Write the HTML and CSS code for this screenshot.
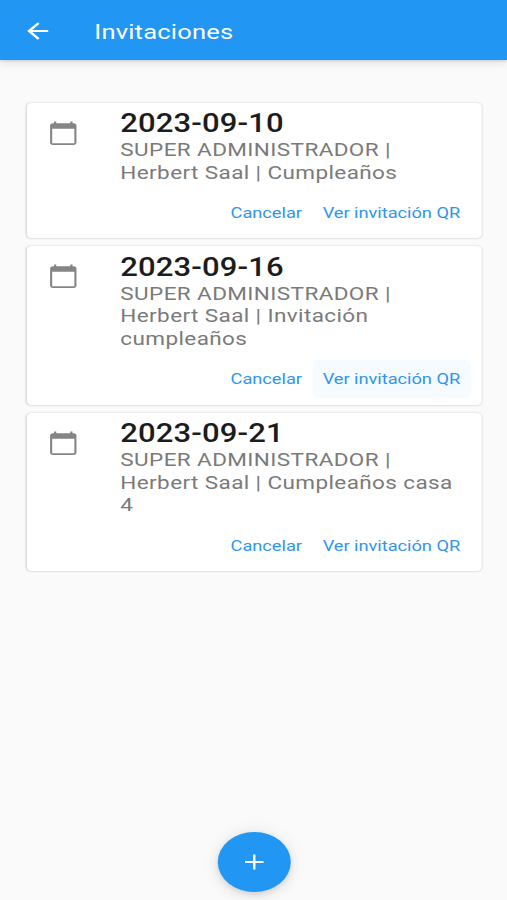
FILE: index.html
```html
<!DOCTYPE html>
<html lang="es">
<head>
<meta charset="utf-8">
<title>Invitaciones</title>
<link rel="stylesheet" href="styles.css">
</head>
<body>
<svg width="0" height="0" class="defs">
  <symbol id="calendar" viewBox="0 0 24 24"><path d="M20 3h-1V1.300h-1.700V3H6.700V1.300H5V3H4c-1.100 0-2 .9-2 2v16c0 1.100.9 2 2 2h16c1.100 0 2-.9 2-2V5c0-1.100-.9-2-2-2zm.4 18.400H3.600V8h16.800v13.400z"/></symbol>
</svg>
<div class="screen">
  <header class="bar">
    <svg class="back" viewBox="0 0 24 24"><path d="M20 11H7.830l5.590-5.590L12 4l-8 8 8 8 1.410-1.410L7.830 13H20v-2z"/></svg>
    <h1 class="title">Invitaciones</h1>
  </header>
  <main class="list">
    <article class="card">
      <div class="tile">
        <svg class="cal"><use href="#calendar"/></svg>
        <div class="text"><h2 class="date">2023-09-10</h2><p class="info">SUPER ADMINISTRADOR |<br>Herbert Saal | Cumpleaños</p></div>
      </div>
      <div class="actions"><button class="btn">Cancelar</button><button class="btn">Ver invitación QR</button></div>
    </article>
    <article class="card">
      <div class="tile">
        <svg class="cal"><use href="#calendar"/></svg>
        <div class="text"><h2 class="date">2023-09-16</h2><p class="info">SUPER ADMINISTRADOR |<br>Herbert Saal | Invitación<br>cumpleaños</p></div>
      </div>
      <div class="actions"><button class="btn">Cancelar</button><button class="btn active">Ver invitación QR</button></div>
    </article>
    <article class="card">
      <div class="tile">
        <svg class="cal"><use href="#calendar"/></svg>
        <div class="text"><h2 class="date">2023-09-21</h2><p class="info">SUPER ADMINISTRADOR |<br>Herbert Saal | Cumpleaños casa<br>4</p></div>
      </div>
      <div class="actions"><button class="btn">Cancelar</button><button class="btn">Ver invitación QR</button></div>
    </article>
  </main>
  <button class="fab" aria-label="Agregar"><svg viewBox="0 0 24 24"><path d="M19 12.900h-6.100V19h-1.800v-6.100H5v-1.800h6.100V5h1.800v6.100H19z"/></svg></button>
</div>
</body>
</html>
```

FILE: styles.css
```css
* { box-sizing: border-box; }
html, body { margin: 0; height: 900px; overflow: hidden; background: #fafafa; }
body { font-family: Roboto, "Liberation Sans", sans-serif; }
h1, h2, p { margin: 0; }
button { border: 0; background: none; font: inherit; padding: 0; }
.defs { display: none; }

/* The layout is 416.7 units wide and widened to fill the window. */
.screen {
  width: 416.7px;
  height: 900px;
  display: flex;
  flex-direction: column;
  transform: scaleX(1.2167);
  transform-origin: 0 0;
}
.bar {
  height: 60.400px;
  flex: none;
  display: flex;
  align-items: center;
  padding: 2px 0 0 18px;
  background: #2196f3;
  box-shadow: 0 1px 2px rgba(0,0,0,.14), 0 4px 7px rgba(0,0,0,.08);
}
.back { width: 26px; height: 26px; fill: #fff; margin-top: -1px; }
.title {
  margin: 1px 0 0 33.500px;
  color: #fff;
  font-size: 21px;
  font-weight: 400;
  line-height: 26px;
  letter-spacing: .14px;
}
.list {
  flex: 1;
  padding: 42.200px 21px 0 22px;
  display: flex;
  flex-direction: column;
  gap: 8px;
}
.card {
  height: 135.800px;
  display: flex;
  flex-direction: column;
  padding-top: 6.500px;
  border-radius: 4px;
  background: #fff;
  box-shadow: 0 0 2px rgba(0,0,0,.18), 0 1px 2px rgba(0,0,0,.04);
}
.card:nth-child(n+2) { height: 158.200px; }
.tile { display: flex; padding-left: 17px; }
.cal { width: 26px; height: 26px; margin-top: 10.500px; fill: #858585; flex: none; }
.text { margin-left: 33.900px; white-space: nowrap; }
.date { font-size: 25.500px; font-weight: 500; line-height: 29px; letter-spacing: .1px; color: #1c1c1c; }
.info { font-size: 18.500px; line-height: 22.400px; letter-spacing: .32px; color: #7a7a7a; padding-top: 1.100px; }
.actions {
  display: flex;
  justify-content: flex-end;
  margin-top: 10px;
  padding-right: 9px;
}
.btn {
  height: 38px;
  padding: .5px 8.500px 0;
  border-radius: 4px;
  color: #2f96ec;
  font-size: 15px;
  font-weight: 450;
  letter-spacing: -.03px;
  white-space: nowrap;
}
.active { background: #f5fbff; }
.fab {
  width: 60px;
  height: 60px;
  flex: none;
  margin: 0 178px 8.500px 178.500px;
  border-radius: 50%;
  background: #2196f3;
  display: flex;
  align-items: center;
  justify-content: center;
  box-shadow: 0 2px 5px rgba(0,0,0,.08), 0 4px 12px rgba(0,0,0,.08), 0 0 18px rgba(0,0,0,.06);
}
.fab svg { width: 26px; height: 26px; fill: #fff; }
```
